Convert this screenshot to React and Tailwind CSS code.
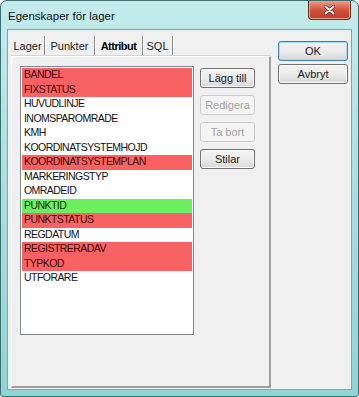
import React from 'react';

const FONT = { fontFamily: '"Liberation Sans", Arial, sans-serif' };

const ITEMS = [
  { name: 'BANDEL', tone: 'red' },
  { name: 'FIXSTATUS', tone: 'red' },
  { name: 'HUVUDLINJE' },
  { name: 'INOMSPAROMRADE' },
  { name: 'KMH' },
  { name: 'KOORDINATSYSTEMHOJD' },
  { name: 'KOORDINATSYSTEMPLAN', tone: 'red' },
  { name: 'MARKERINGSTYP' },
  { name: 'OMRADEID' },
  { name: 'PUNKTID', tone: 'green' },
  { name: 'PUNKTSTATUS', tone: 'red' },
  { name: 'REGDATUM' },
  { name: 'REGISTRERADAV', tone: 'red' },
  { name: 'TYPKOD', tone: 'red' },
  { name: 'UTFORARE' },
];

const TABS = [
  { label: 'Lager', w: 'w-[34px]' },
  { label: 'Punkter', w: 'w-[50px]' },
  { label: 'Attribut', w: 'w-[48px]', active: true },
  { label: 'SQL', w: 'w-[30px]' },
];

const WinButton = ({ children, disabled, isDefault, className = '' }) => {
  if (disabled) {
    return (
      <div className={`flex items-center justify-center h-[20px] rounded-[3px] border border-[#c9cdd0] bg-[#f4f4f4] text-[#a3a3a3] text-[11px] ${className}`}>
        {children}
      </div>
    );
  }
  return (
    <div
      className={`flex items-center justify-center h-[20px] rounded-[3px] border text-[11px] text-[#1a1a1a] ${
        isDefault ? 'border-[#3c7fb1] shadow-[inset_0_0_0_1px_#9ee3fb]' : 'border-[#707070] shadow-[inset_0_0_0_1px_#fbfbfb]'
      } bg-gradient-to-b from-[#f4f4f4] via-[#ebebeb] to-[#d8d8d8] ${className}`}
    >
      {children}
    </div>
  );
};

export default function App() {
  return (
    <div style={FONT} className="w-[359px] h-[397px] bg-white">
      <div className="w-[359px] h-[397px] rounded-t-[7px] rounded-b-[3px] border border-[#3f6e70] bg-gradient-to-b from-[#c4ebec] via-[#a6dfdf] to-[#8fd5d4] flex flex-col px-[6px] pb-[6px]">
        {/* title bar */}
        <div className="h-[28px] flex items-start justify-between">
          <div className="pt-[7px] pl-[1px] text-[11.5px] text-[#111]">Egenskaper för lager</div>
          <div className="mr-[1px] w-[43px] h-[19px] rounded-b-[4px] border border-t-0 border-[#6b2a22] bg-gradient-to-b from-[#ec9c88] via-[#d0533d] to-[#bf3a24] flex items-center justify-center shadow-[inset_0_0_0_1px_#e8a08e]">
            <svg width="11" height="10" viewBox="0 0 11 10">
              <path d="M1.5 1.5 L9.5 8.5 M9.5 1.5 L1.5 8.5" stroke="#5a1a10" strokeWidth="3.2" strokeLinecap="round" />
              <path d="M1.5 1.5 L9.5 8.5 M9.5 1.5 L1.5 8.5" stroke="#ffffff" strokeWidth="2" strokeLinecap="round" />
            </svg>
          </div>
        </div>

        {/* client area */}
        <div className="flex-1 border border-[#7fa7a8] bg-[#f0f0f0] flex pl-[3px] pt-[6px]">
          {/* left column: tabs + panel */}
          <div className="w-[260px] flex flex-col">
            <div className="flex h-[20px] items-stretch">
              {TABS.map((t) => (
                <div
                  key={t.label}
                  className={`${t.w} flex items-center justify-center text-[11px] pt-[1px] border-r border-[#8a8a8a] shadow-[1px_0_0_#ffffff] ${
                    t.active ? 'font-bold tracking-[-0.5px] text-black' : 'text-[#222]'
                  }`}
                >
                  {t.label}
                </div>
              ))}
            </div>
            <div className="flex-1 mb-[1px] border-t border-l border-t-[#ffffff] border-l-[#ffffff] border-r-2 border-b-2 border-r-[#a0a0a0] border-b-[#a0a0a0] shadow-[0_-1px_0_#d4d4d4] flex pl-[8px] pt-[9px]">
              {/* listbox */}
              <div className="w-[174px] h-[269px] border border-[#828790] bg-white p-[1px]">
                {ITEMS.map((it) => (
                  <div
                    key={it.name}
                    className={`h-[14.5px] flex items-center pl-[2px] text-[10.5px] tracking-[-0.55px] ${
                      it.tone === 'red'
                        ? 'bg-[#f86262] text-[#3a0808]'
                        : it.tone === 'green'
                        ? 'bg-[#6cf060] text-[#0d2a0a]'
                        : 'text-[#111]'
                    }`}
                  >
                    {it.name}
                  </div>
                ))}
              </div>
              {/* side buttons */}
              <div className="ml-[6px] pt-[2px] flex flex-col gap-[7px]">
                <WinButton className="w-[55px]">Lägg till</WinButton>
                <WinButton className="w-[55px]" disabled>Redigera</WinButton>
                <WinButton className="w-[55px]" disabled>Ta bort</WinButton>
                <WinButton className="w-[55px]">Stilar</WinButton>
              </div>
            </div>
          </div>

          {/* right column: OK / Avbryt */}
          <div className="ml-[7px] pt-[5px] flex flex-col gap-[3px]">
            <WinButton className="w-[70px]" isDefault>OK</WinButton>
            <WinButton className="w-[70px]">Avbryt</WinButton>
          </div>
        </div>
      </div>
    </div>
  );
}
